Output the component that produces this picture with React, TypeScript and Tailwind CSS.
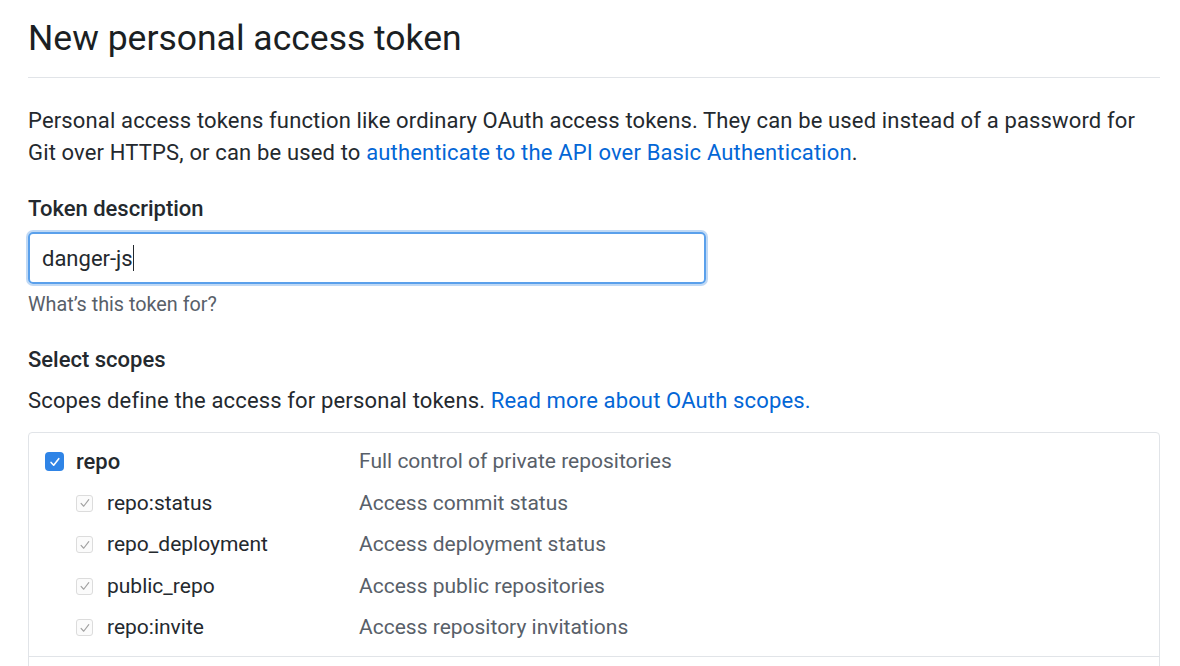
import React from "react";

const scopes = [
  { name: "repo:status", desc: "Access commit status" },
  { name: "repo_deployment", desc: "Access deployment status" },
  { name: "public_repo", desc: "Access public repositories" },
  { name: "repo:invite", desc: "Access repository invitations" },
];

const CheckMark = ({ color, width }: { color: string; width: number }) => (
  <svg viewBox="0 0 16 16" className="w-[14px] h-[14px]">
    <path d="M3.5 8.5l3 3.2 5.8-7.5" fill="none" stroke={color} strokeWidth={width} strokeLinecap="round" strokeLinejoin="round" />
  </svg>
);

const App = () => {
  return (
    <div
      className="w-[1180px] h-[666px] overflow-hidden bg-white text-[#24292e] px-[28px] pr-[20px]"
      style={{ fontFamily: "Roboto, 'Liberation Sans', sans-serif" }}
    >
      <div className="pt-[14px] pb-[15px] border-b border-[#e1e4e8]">
        <h1 className="text-[35.5px] leading-[48px] font-normal text-[#1b1f23]">New personal access token</h1>
      </div>

      <p className="mt-[27px] text-[22px] leading-[32px] tracking-[0.15px]">
        Personal access tokens function like ordinary OAuth access tokens. They can be used instead of a password for
        <br />
        Git over HTTPS, or can be used to{" "}
        <span className="text-[#0366d6]">authenticate to the API over Basic Authentication</span>.
      </p>

      <div className="mt-[24px] text-[22px] leading-[32px] font-medium">Token description</div>
      <div className="mt-[7px] w-[678px] h-[52px] rounded-[5px] border-2 border-[#5aa0eb] shadow-[0_0_0_2px_rgba(3,102,214,0.25)] flex items-center px-[12px]">
        <span className="text-[22px]">danger-js</span>
        <span className="w-[1.5px] h-[26px] bg-[#24292e]" />
      </div>
      <div className="mt-[7px] text-[19.8px] leading-[28px] text-[#586069]">What’s this token for?</div>

      <div className="mt-[25px] text-[22px] leading-[32px] font-medium">Select scopes</div>
      <p className="mt-[9px] text-[22px] leading-[32px] tracking-[0.15px]">
        Scopes define the access for personal tokens.{" "}
        <span className="text-[#0366d6]">Read more about OAuth scopes.</span>
      </p>

      <div className="mt-[15px] border border-[#e1e4e8] rounded-[4px]">
        <div className="pt-[8px] pb-[7px] border-b border-[#e1e4e8]">
          <div className="flex items-center h-[41.5px] pl-[16px]">
            <div className="w-[19px] h-[19px] rounded-[4px] bg-[#2f84e6] flex items-center justify-center">
              <CheckMark color="#ffffff" width={1.8} />
            </div>
            <span className="ml-[12px] w-[283px] text-[22px] font-medium">repo</span>
            <span className="text-[21px] text-[#586069]">Full control of private repositories</span>
          </div>
          {scopes.map((s) => (
            <div key={s.name} className="flex items-center h-[41.5px] pl-[47px]">
              <div className="w-[17px] h-[17px] rounded-[3px] border border-[#dcdcdc] bg-[#fbfbfb] flex items-center justify-center">
                <CheckMark color="#a0a0a0" width={1.3} />
              </div>
              <span className="ml-[14px] w-[252px] text-[21px]">{s.name}</span>
              <span className="text-[21px] text-[#586069]">{s.desc}</span>
            </div>
          ))}
        </div>
        <div className="h-[40px]" />
      </div>
    </div>
  );
};

export default App;
